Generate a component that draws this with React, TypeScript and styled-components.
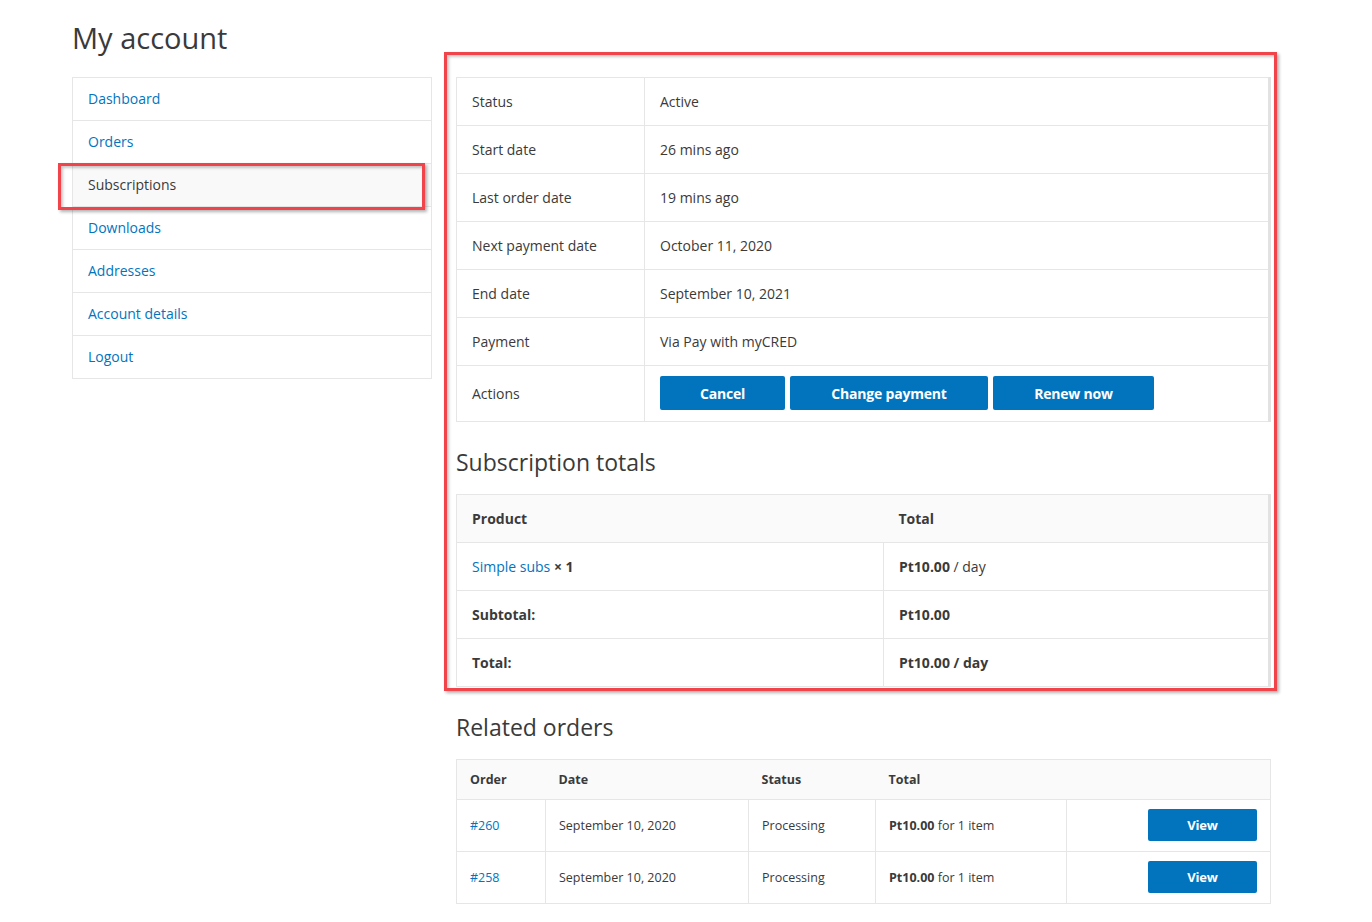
import React from "react";
import styled, { createGlobalStyle } from "styled-components";

const Global = createGlobalStyle`
  html, body { margin: 0; padding: 0; background: #fff; }
  body {
    font-family: "Open Sans", "Noto Sans", "Liberation Sans", sans-serif;
    color: #3a3a3a;
    font-size: 14px;
  }
  * { box-sizing: border-box; }
`;

const Page = styled.div`
  padding: 18px 0 0 72px;
  width: 1372px;
`;

const Title = styled.h1`
  margin: 0 0 19px 0;
  font-size: 29px;
  font-weight: 400;
  line-height: 40px;
  color: #3a3a3a;
`;

const Columns = styled.div`
  display: grid;
  grid-template-columns: 360px 815px;
  column-gap: 24px;
  align-items: start;
`;

const Nav = styled.ul`
  list-style: none;
  margin: 0;
  padding: 0;
  border: 1px solid #e6e6e6;
  border-bottom: none;
`;

const NavItem = styled.li<{ $active?: boolean }>`
  position: relative;
  height: 43px;
  display: flex;
  align-items: center;
  padding: 0 15px 1px;
  border-bottom: 1px solid #e6e6e6;
  background: ${(p) => (p.$active ? "#f9f9f9" : "#fff")};
  color: ${(p) => (p.$active ? "#3a3a3a" : "#0274be")};
  font-size: 14px;
`;

const Highlight = styled.div<{ $l: number; $r: number; $t: number; $b: number }>`
  position: absolute;
  z-index: 2;
  left: ${(p) => p.$l}px;
  right: ${(p) => p.$r}px;
  top: ${(p) => p.$t}px;
  bottom: ${(p) => p.$b}px;
  border: 3px solid #f0444a;
  box-shadow: 2px 2px 3px rgba(0, 0, 0, 0.3), inset 2px 2px 3px rgba(0, 0, 0, 0.22);
  pointer-events: none;
`;

const Main = styled.div``;

const Framed = styled.div`
  position: relative;
`;

const Table = styled.table`
  width: 100%;
  border-collapse: collapse;
  border: 1px solid #e6e6e6;
  border-right: 3px solid #e2e2e2;
  font-size: 14px;
`;

const Row = styled.tr<{ $h?: number; $head?: boolean }>`
  height: ${(p) => p.$h ?? 48}px;
  background: ${(p) => (p.$head ? "#fafafa" : "#fff")};
`;

const Cell = styled.td<{ $w?: number; $bold?: boolean; $pad?: number; $right?: boolean }>`
  border: 1px solid #e6e6e6;
  padding: 0 ${(p) => p.$pad ?? 15}px 1px;
  width: ${(p) => (p.$w ? `${p.$w}px` : "auto")};
  font-weight: ${(p) => (p.$bold ? 700 : 400)};
  text-align: ${(p) => (p.$right ? "right" : "left")};
  vertical-align: middle;
`;

const HeadCell = styled.th<{ $w?: number; $pad?: number; $size?: number }>`
  border-top: 1px solid #e6e6e6;
  border-bottom: 1px solid #e6e6e6;
  padding: 0 ${(p) => p.$pad ?? 15}px 1px;
  width: ${(p) => (p.$w ? `${p.$w}px` : "auto")};
  text-align: left;
  font-weight: 700;
  font-size: ${(p) => p.$size ?? 14}px;
`;

const Buttons = styled.div`
  display: flex;
  gap: 5px;
`;

const Button = styled.button<{ $w: number; $h?: number; $size?: number }>`
  width: ${(p) => p.$w}px;
  height: ${(p) => p.$h ?? 34}px;
  border: none;
  border-radius: 2px;
  background: #0274be;
  color: #fff;
  font-family: "Open Sans", "Noto Sans", sans-serif;
  font-weight: 700;
  font-size: ${(p) => p.$size ?? 14}px;
  letter-spacing: -0.2px;
  cursor: pointer;
`;

const SectionTitle = styled.h2<{ $top: number; $bottom: number }>`
  margin: ${(p) => p.$top}px 0 ${(p) => p.$bottom}px 0;
  font-size: 23px;
  font-weight: 400;
  line-height: 32px;
  color: #3a3a3a;
`;

const Link = styled.a`
  color: #0274be;
  text-decoration: none;
`;

const Muted = styled.span`
  font-weight: 400;
`;

const SmallTable = styled(Table)`
  font-size: 12.5px;
  border-right: 1px solid #e6e6e6;
`;

const details: [string, string][] = [
  ["Status", "Active"],
  ["Start date", "26 mins ago"],
  ["Last order date", "19 mins ago"],
  ["Next payment date", "October 11, 2020"],
  ["End date", "September 10, 2021"],
  ["Payment", "Via Pay with myCRED"],
];

const navItems = [
  "Dashboard",
  "Orders",
  "Subscriptions",
  "Downloads",
  "Addresses",
  "Account details",
  "Logout",
];

const orders = [
  { id: "#260", date: "September 10, 2020" },
  { id: "#258", date: "September 10, 2020" },
];

export default function App() {
  return (
    <>
      <Global />
      <Page>
        <Title>My account</Title>
        <Columns>
          <Nav>
            {navItems.map((n) => (
              <NavItem key={n} $active={n === "Subscriptions"}>
                {n}
                {n === "Subscriptions" && <Highlight $l={-15} $r={6} $t={-1} $b={-4} />}
              </NavItem>
            ))}
          </Nav>
          <Main>
            <Framed>
              <Table>
                <tbody>
                  {details.map(([k, v]) => (
                    <Row key={k}>
                      <Cell $w={188}>{k}</Cell>
                      <Cell>{v}</Cell>
                    </Row>
                  ))}
                  <Row $h={56}>
                    <Cell $w={188}>Actions</Cell>
                    <Cell>
                      <Buttons>
                        <Button $w={125}>Cancel</Button>
                        <Button $w={198}>Change payment</Button>
                        <Button $w={161}>Renew now</Button>
                      </Buttons>
                    </Cell>
                  </Row>
                </tbody>
              </Table>
              <SectionTitle $top={24} $bottom={16}>Subscription totals</SectionTitle>
              <Table>
                <tbody>
                  <Row $head>
                    <HeadCell $w={427}>Product</HeadCell>
                    <HeadCell>Total</HeadCell>
                  </Row>
                  <Row>
                    <Cell>
                      <Link>Simple subs</Link> <strong>× 1</strong>
                    </Cell>
                    <Cell>
                      <strong>Pt10.00</strong> <Muted>/ day</Muted>
                    </Cell>
                  </Row>
                  <Row>
                    <Cell $bold>Subtotal:</Cell>
                    <Cell $bold>Pt10.00</Cell>
                  </Row>
                  <Row>
                    <Cell $bold>Total:</Cell>
                    <Cell $bold>Pt10.00 / day</Cell>
                  </Row>
                </tbody>
              </Table>
              <Highlight $l={-12} $r={-6} $t={-25} $b={-4} />
            </Framed>
            <SectionTitle $top={24} $bottom={16}>Related orders</SectionTitle>
            <SmallTable>
              <tbody>
                <Row $head $h={40}>
                  <HeadCell $w={89} $pad={13} $size={12.5}>Order</HeadCell>
                  <HeadCell $w={203} $pad={13} $size={12.5}>Date</HeadCell>
                  <HeadCell $w={127} $pad={13} $size={12.5}>Status</HeadCell>
                  <HeadCell $w={191} $pad={13} $size={12.5}>Total</HeadCell>
                  <HeadCell $pad={13} $size={12.5}></HeadCell>
                </Row>
                {orders.map((o) => (
                  <Row key={o.id} $h={52}>
                    <Cell $pad={13}>
                      <Link>{o.id}</Link>
                    </Cell>
                    <Cell $pad={13}>{o.date}</Cell>
                    <Cell $pad={13}>Processing</Cell>
                    <Cell $pad={13}>
                      <strong>Pt10.00</strong> for 1 item
                    </Cell>
                    <Cell $pad={13} $right>
                      <Button $w={109} $h={32} $size={13}>View</Button>
                    </Cell>
                  </Row>
                ))}
              </tbody>
            </SmallTable>
          </Main>
        </Columns>
      </Page>
    </>
  );
}
